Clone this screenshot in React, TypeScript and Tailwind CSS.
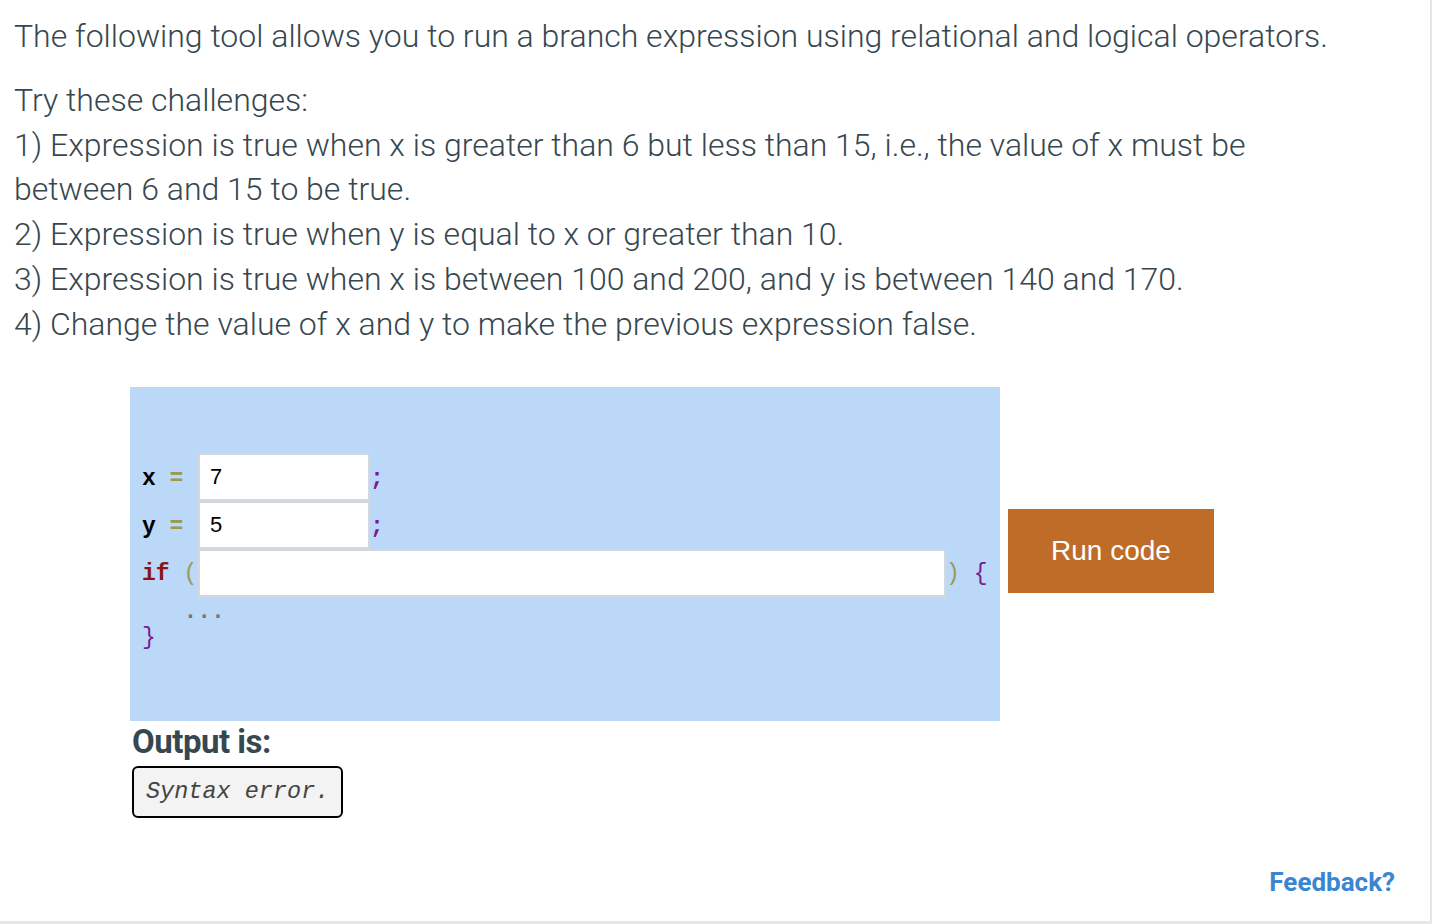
const challenges = [
  "1) Expression is true when x is greater than 6 but less than 15, i.e., the value of x must be between 6 and 15 to be true.",
  "2) Expression is true when y is equal to x or greater than 10.",
  "3) Expression is true when x is between 100 and 200, and y is between 140 and 170.",
  "4) Change the value of x and y to make the previous expression false.",
];

const mono = "font-['Liberation_Mono','DejaVu_Sans_Mono',monospace] text-[23px] leading-none";

function VarRow({ name, value }: { name: string; value: string }) {
  return (
    <div className={`flex items-center ${mono}`}>
      <span className="w-[56px] whitespace-pre pt-[5px]">
        <span className="font-bold text-black">{name}</span>
        <span className="font-bold text-[#999955]"> = </span>
      </span>
      <input
        defaultValue={value}
        className="h-[48px] w-[172px] border-2 border-[#d3d8dc] bg-white px-[10px] font-['Liberation_Sans',Arial,sans-serif] text-[22px] text-black outline-none"
      />
      <span className="w-[14px] pt-[5px] text-center font-bold text-[#7b1a8e]">;</span>
    </div>
  );
}

export default function App() {
  return (
    <div className="min-h-screen w-full bg-[#e6e6e6]">
      <div className="relative flex h-[921px] w-[1430px] flex-col bg-white pl-[14px] pt-[14px] font-['Roboto',sans-serif] text-[#37474f]">
        <p className="text-[32px] font-light leading-[44.8px]">
          The following tool allows you to run a branch expression using relational and logical operators.
        </p>
        <div className="mt-[19px] text-[32px] font-light leading-[44.8px]">
          <p>Try these challenges:</p>
          {challenges.map((c) => (
            <p key={c} className="w-[1320px]">
              {c}
            </p>
          ))}
        </div>

        <div className="ml-[116px] mt-[40px] flex items-center">
          <div className="flex h-[334px] w-[870px] flex-col bg-[#bcd8f8] pl-[12px] pt-[66px]">
            <VarRow name="x" value="7" />
            <VarRow name="y" value="5" />
            <div className={`flex items-center ${mono}`}>
              <span className="w-[56px] whitespace-pre pt-[4px]">
                <span className="font-bold text-[#8b1414]">if</span>
                <span className="text-[#999955]"> (</span>
              </span>
              <input className="h-[48px] w-[748px] border-2 border-[#d3d8dc] bg-white outline-none" />
              <span className="whitespace-pre pt-[4px]">
                <span className="text-[#999955]">)</span>
                <span className="text-[#7b1a8e]"> {"{"}</span>
              </span>
            </div>
            <div className={`${mono} mt-[4px] h-[26px] whitespace-pre font-bold leading-[26px] text-[#777]`}>{"   ..."}</div>
            <div className={`${mono} h-[26px] leading-[26px] text-[#7b1a8e]`}>{"}"}</div>
          </div>
          <button className="ml-[8px] mt-[-6px] h-[84px] w-[206px] bg-[#bf6c28] font-['Liberation_Sans',Arial,sans-serif] text-[28px] text-white">
            Run code
          </button>
        </div>

        <div className="ml-[118px] mt-[1px]">
          <h3 className="text-[33px] font-bold leading-[40px] tracking-[-0.5px]">Output is:</h3>
          <div className="mt-[4px] inline-block rounded-[6px] border-2 border-black bg-[#f3f3f3] px-[12px] py-[11px] font-['Liberation_Mono',monospace] text-[23.5px] italic leading-[26px] text-[#444]">
            Syntax error.
          </div>
        </div>

        <div className="absolute bottom-[19px] right-[35px] text-[26px] font-bold text-[#3b86d0]">Feedback?</div>
      </div>
    </div>
  );
}
